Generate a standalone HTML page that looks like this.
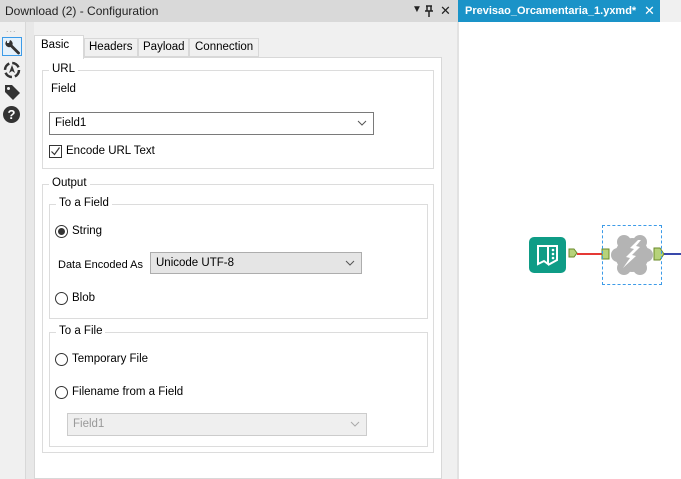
<!DOCTYPE html>
<html><head><meta charset="utf-8"><style>
*{margin:0;padding:0;box-sizing:border-box}
body{width:681px;height:479px;overflow:hidden;position:relative;background:#f0f0f0;font-family:"Liberation Sans",sans-serif;font-size:11.5px;color:#000}
.a{position:absolute;white-space:nowrap}
.gb{position:absolute;border:1px solid #dcdcdc}
.gl{position:absolute;top:-8px;left:6px;background:#fff;padding:0 3px;font-size:11.5px}
.dd{position:absolute;border:1px solid #7a7a7a;background:#fff;padding:4px 5px;font-size:11.5px}
.chev{position:absolute;right:6px;top:6px}
.rad{position:absolute;width:13px;height:13px;border:1px solid #333;border-radius:50%;background:#fff}
</style></head><body>
<div class="a" style="left:0;top:0;width:458px;height:22px;background:#d9d9d9"></div>
<div class="a" style="left:5px;top:4px;font-size:12px;color:#222">Download (2) - Configuration</div>
<div class="a" style="left:412px;top:4px;font-size:10px;color:#222">&#9660;</div>
<svg class="a" style="left:424px;top:5px" width="10" height="12"><path d="M2 1h6M3 1v5h4V1M1 6h8M5 6v6" stroke="#222" stroke-width="1.5" fill="none"/></svg>
<div class="a" style="left:440px;top:3px;font-size:13px;color:#222">&#10005;</div>
<div class="a" style="left:458px;top:0;width:223px;height:22px;background:#f0f0f0"></div>
<div class="a" style="left:458px;top:0;width:202px;height:22px;background:#1a93c8"></div>
<div class="a" style="left:465px;top:5px;color:#fff;font-weight:bold;font-size:11px">Previsao_Orcamentaria_1.yxmd*</div>
<div class="a" style="left:644px;top:3px;color:#fff;font-size:13px">&#10005;</div>
<div class="a" style="left:458px;top:22px;width:223px;height:457px;background:#fff"></div>
<div class="a" style="left:457px;top:22px;width:2px;height:457px;background:#e2e2e2"></div>
<!-- sidebar -->
<div class="a" style="left:6px;top:24px;font-size:9px;color:#aaa;letter-spacing:1px">...</div>
<div class="a" style="left:25px;top:22px;width:9px;height:457px;background:#e8e8e8;border-left:1px solid #d8d8d8"></div>
<div class="a" style="left:2px;top:37px;width:20px;height:19px;border:1px solid #3c9be8;background:#e5f1fb"></div>
<svg class="a" style="left:3px;top:38px" width="18" height="18" viewBox="0 0 18 18"><path d="M4 2.5 a4 4 0 0 0 -1.5 4 a4 4 0 0 0 5 2.5 l7 7 a1.4 1.4 0 0 0 2 -2 l-7 -7 a4 4 0 0 0 -2.5 -5 l-1 3 -2 0z" fill="#333"/></svg>
<svg class="a" style="left:3px;top:61px" width="18" height="18" viewBox="0 0 18 18"><circle cx="9" cy="9" r="7" fill="none" stroke="#333" stroke-width="2.5" stroke-dasharray="8 3"/><path d="M9 4 L12 12 L9 10 L6 12Z" fill="#333"/></svg>
<svg class="a" style="left:3px;top:83px" width="18" height="18" viewBox="0 0 18 18"><path d="M2 2 h7 l8 8 -7 7 -8 -8z" fill="#333"/><circle cx="5.5" cy="5.5" r="1.5" fill="#f0f0f0"/></svg>
<div class="a" style="left:3px;top:106px;width:17px;height:17px;border-radius:50%;background:#333;color:#fff;font-weight:bold;font-size:13px;text-align:center;line-height:17px">?</div>
<!-- panel -->
<div class="a" style="left:34px;top:57px;width:408px;height:422px;background:#fff;border:1px solid #d8d8d8"></div>
<div class="a" style="left:84px;top:38px;width:54px;height:19px;background:#f0f0f0;border:1px solid #d8d8d8"></div>
<div class="a" style="left:138px;top:38px;width:51px;height:19px;background:#f0f0f0;border:1px solid #d8d8d8"></div>
<div class="a" style="left:189px;top:38px;width:70px;height:19px;background:#f0f0f0;border:1px solid #d8d8d8"></div>
<div class="a" style="left:34px;top:35px;width:50px;height:24px;background:#fff;border:1px solid #d8d8d8;border-bottom:none"></div>
<div class="a" style="left:41px;top:39px">Basic</div>
<div class="a" style="left:89px;top:41px">Headers</div>
<div class="a" style="left:143px;top:41px">Payload</div>
<div class="a" style="left:195px;top:41px">Connection</div>
<div class="gb" style="left:42px;top:70px;width:392px;height:99px"><div class="gl">URL</div></div>
<div class="a" style="left:51px;top:83px">Field</div>
<div class="dd" style="left:49px;top:112px;width:325px;height:23px">Field1<svg class="chev" width="10" height="8"><path d="M1 2l4 4 4-4" fill="none" stroke="#555"/></svg></div>
<div class="a" style="left:49px;top:145px;width:13px;height:13px;border:1px solid #333;background:#fff"></div>
<svg class="a" style="left:50px;top:146px" width="11" height="11"><path d="M1.5 5.5l3 3 5-7" fill="none" stroke="#333" stroke-width="1.2"/></svg>
<div class="a" style="left:66px;top:145px">Encode URL Text</div>
<div class="gb" style="left:42px;top:184px;width:392px;height:269px"><div class="gl">Output</div></div>
<div class="gb" style="left:49px;top:204px;width:379px;height:115px"><div class="gl">To a Field</div></div>
<div class="rad" style="left:55px;top:225px"></div><div class="a" style="left:58px;top:228px;width:7px;height:7px;border-radius:50%;background:#333"></div>
<div class="a" style="left:72px;top:225px">String</div>
<div class="a" style="left:58px;top:259px;font-size:11px">Data Encoded As</div>
<div class="dd" style="left:150px;top:252px;width:212px;height:22px;background:#e5e5e5;border-color:#adadad">Unicode UTF-8<svg class="chev" width="10" height="8"><path d="M1 2l4 4 4-4" fill="none" stroke="#555"/></svg></div>
<div class="rad" style="left:55px;top:292px"></div>
<div class="a" style="left:72px;top:292px">Blob</div>
<div class="gb" style="left:49px;top:332px;width:379px;height:115px"><div class="gl">To a File</div></div>
<div class="rad" style="left:55px;top:353px"></div>
<div class="a" style="left:72px;top:353px">Temporary File</div>
<div class="rad" style="left:55px;top:386px"></div>
<div class="a" style="left:72px;top:386px">Filename from a Field</div>
<div class="dd" style="left:67px;top:413px;width:300px;height:23px;background:#efefef;border-color:#ccc;color:#999">Field1<svg class="chev" width="10" height="8"><path d="M1 2l4 4 4-4" fill="none" stroke="#aaa"/></svg></div>
<!-- canvas -->
<div class="a" style="left:529px;top:237px;width:37px;height:36px;border-radius:5px;background:#0f9c86"></div>
<svg class="a" style="left:532px;top:240px" width="32" height="30"><path d="M6 6h10v18l-4-3-6 3z M16 6h9v14l-9 5" fill="none" stroke="#fff" stroke-width="2"/><circle cx="21" cy="10" r="1.3" fill="#fff"/><circle cx="21" cy="14" r="1.3" fill="#fff"/><circle cx="21" cy="18" r="1.3" fill="#fff"/></svg>
<svg class="a" style="left:568px;top:246px" width="113" height="20"><path d="M1 3h5l3 4-3 4H1z" fill="#b6d27a" stroke="#6a8a2a"/><line x1="9" y1="8" x2="35" y2="8" stroke="#e53935" stroke-width="2"/><rect x="34" y="3" width="7" height="10" fill="#b6d27a" stroke="#6a8a2a"/><path d="M86 2h6l4 6-4 6h-6z" fill="#b6d27a" stroke="#6a8a2a"/><line x1="96" y1="8" x2="113" y2="8" stroke="#3949ab" stroke-width="2"/></svg>
<div class="a" style="left:602px;top:225px;width:60px;height:60px;border:1px dashed #3c9be8"></div>
<svg class="a" style="left:610px;top:232px" width="44" height="46" viewBox="0 0 44 46"><g fill="#b4b4b4"><circle cx="22" cy="23" r="17"/><circle cx="14" cy="10" r="7"/><circle cx="30" cy="10" r="7"/><circle cx="8" cy="23" r="7"/><circle cx="36" cy="23" r="7"/><circle cx="14" cy="36" r="7"/><circle cx="30" cy="36" r="7"/></g><path d="M28 8l-8 8 4 1-8 8 4 1-7 10 13-12-4-1 8-8-4-1 5-6z" fill="#fff"/></svg>
</body></html>
